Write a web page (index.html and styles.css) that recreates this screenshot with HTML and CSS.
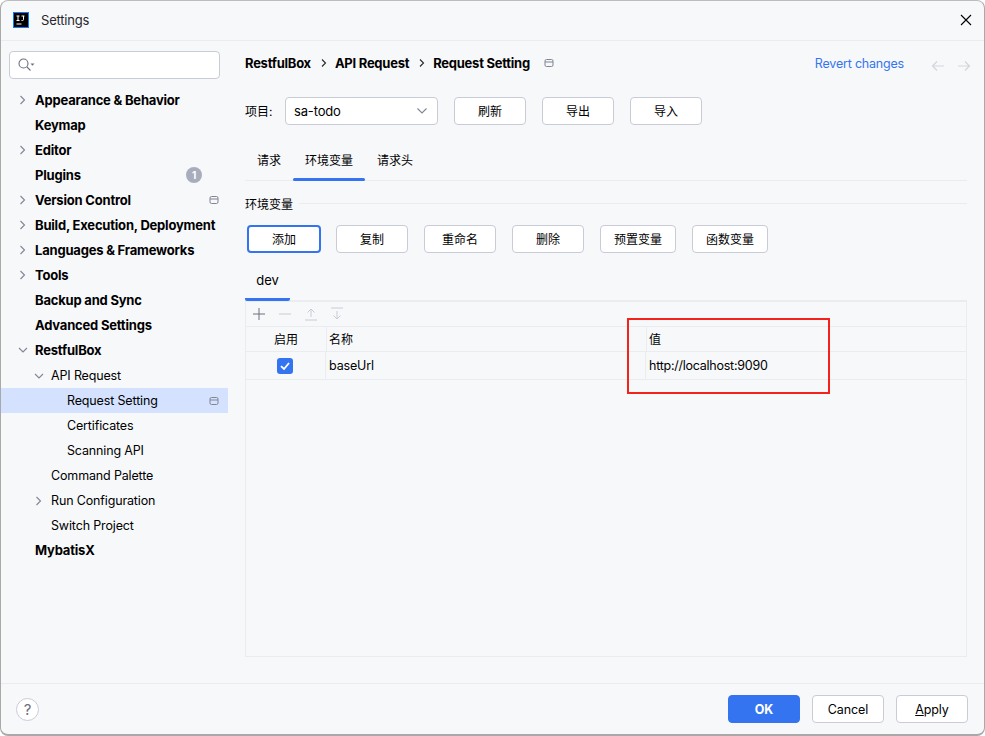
FILE: index.html
```html
<!DOCTYPE html>
<html lang="zh">
<head>
<meta charset="utf-8">
<title>Settings</title>
<link rel="stylesheet" href="styles.css">
</head>
<body>
<div class="window">
  <header class="titlebar">
    <svg class="logo" width="16" height="16" viewBox="0 0 16 16"><rect width="16" height="16" fill="#087cfa"/><rect x="1" y="1" width="14" height="14" fill="#000"/><path d="M3.500 4h3M5 4v4.500M3.500 8.500h3M8.500 4h3M10.500 4v3.500q0 1-1 1h-1M3.500 12h5" stroke="#fff" stroke-width="1" fill="none"/></svg>
    <span class="title">Settings</span>
    <svg class="close" width="12" height="12" viewBox="0 0 12 12"><path d="M1 1l10 10M11 1L1 11" stroke="#000" stroke-width="1.100"/></svg>
  </header>
  <div class="main">
    <aside class="sidebar">
      <div class="search">
        <svg width="18" height="16" viewBox="0 0 18 16"><circle cx="5.500" cy="6.500" r="4.500" fill="none" stroke="#6c707e" stroke-width="1.100"/><path d="M9 10l3.500 3.500" stroke="#6c707e" stroke-width="1.100"/><path d="M12.500 6.500h4l-2 2.200z" fill="#6c707e"/></svg>
      </div>
      <nav class="tree">
        <div class="row top"><svg class="arrow" viewBox="0 0 10 10"><path d="M2.500 1l4 4-4 4"/></svg>Appearance &amp; Behavior</div>
        <div class="row top"><span class="arrow"></span>Keymap</div>
        <div class="row top"><svg class="arrow" viewBox="0 0 10 10"><path d="M2.500 1l4 4-4 4"/></svg>Editor</div>
        <div class="row top"><span class="arrow"></span>Plugins<span class="badge">1</span></div>
        <div class="row top"><svg class="arrow" viewBox="0 0 10 10"><path d="M2.500 1l4 4-4 4"/></svg>Version Control<svg class="proj" viewBox="0 0 10 10"><rect x="1" y="1.500" width="8" height="7" rx="1.500"/><path d="M1 4h8"/></svg></div>
        <div class="row top"><svg class="arrow" viewBox="0 0 10 10"><path d="M2.500 1l4 4-4 4"/></svg>Build, Execution, Deployment</div>
        <div class="row top"><svg class="arrow" viewBox="0 0 10 10"><path d="M2.500 1l4 4-4 4"/></svg>Languages &amp; Frameworks</div>
        <div class="row top"><svg class="arrow" viewBox="0 0 10 10"><path d="M2.500 1l4 4-4 4"/></svg>Tools</div>
        <div class="row top"><span class="arrow"></span>Backup and Sync</div>
        <div class="row top"><span class="arrow"></span>Advanced Settings</div>
        <div class="row top"><svg class="arrow" viewBox="0 0 10 10"><path d="M1 3l4 4 4-4"/></svg>RestfulBox</div>
        <div class="row l1"><svg class="arrow" viewBox="0 0 10 10"><path d="M1 3l4 4 4-4"/></svg>API Request</div>
        <div class="row l2 selected">Request Setting<svg class="proj" viewBox="0 0 10 10"><rect x="1" y="1.500" width="8" height="7" rx="1.500"/><path d="M1 4h8"/></svg></div>
        <div class="row l2">Certificates</div>
        <div class="row l2">Scanning API</div>
        <div class="row l1"><span class="arrow"></span>Command Palette</div>
        <div class="row l1"><svg class="arrow" viewBox="0 0 10 10"><path d="M2.500 1l4 4-4 4"/></svg>Run Configuration</div>
        <div class="row l1"><span class="arrow"></span>Switch Project</div>
        <div class="row top"><span class="arrow"></span>MybatisX</div>
      </nav>
    </aside>
    <section class="content">
      <div class="crumbs">
        <b>RestfulBox</b>
        <svg class="sep" viewBox="0 0 8 10"><path d="M2 1.500L5.500 5 2 8.500"/></svg>
        <b>API Request</b>
        <svg class="sep" viewBox="0 0 8 10"><path d="M2 1.500L5.500 5 2 8.500"/></svg>
        <b>Request Setting</b>
        <svg class="proj crumb-proj" viewBox="0 0 10 10"><rect x="1" y="1.500" width="8" height="7" rx="1.500"/><path d="M1 4h8"/></svg>
        <a class="revert">Revert changes</a>
        <svg class="nav-arrow first" viewBox="0 0 14 12"><path d="M13 6H1.500M6 1.500L1.500 6 6 10.500"/></svg>
        <svg class="nav-arrow" viewBox="0 0 14 12"><path d="M1 6h11.500M8 1.500L12.500 6 8 10.500"/></svg>
      </div>
      <div class="project-row">
        <label class="zh">项目:</label>
        <div class="combo">sa-todo<svg viewBox="0 0 12 8" width="12" height="8"><path d="M1.500 1.500L6 6l4.500-4.500" fill="none" stroke="#818594" stroke-width="1.100"/></svg></div>
        <button class="btn">刷新</button>
        <button class="btn">导出</button>
        <button class="btn">导入</button>
      </div>
      <div class="tabs">
        <span class="tab">请求</span>
        <span class="tab active">环境变量</span>
        <span class="tab">请求头</span>
      </div>
      <div class="group-title"><span class="zh">环境变量</span><i></i></div>
      <div class="actions">
        <button class="btn primary">添加</button>
        <button class="btn">复制</button>
        <button class="btn">重命名</button>
        <button class="btn">删除</button>
        <button class="btn wide">预置变量</button>
        <button class="btn wide">函数变量</button>
      </div>
      <div class="env-tabs"><span class="env-tab">dev</span></div>
      <div class="panel">
        <div class="tools">
          <svg viewBox="0 0 16 16"><path d="M2 8h12M8 2v12" stroke="#6c707e"/></svg>
          <svg viewBox="0 0 16 16"><path d="M2 8h12" stroke="#c9ccd6"/></svg>
          <svg viewBox="0 0 16 16"><path d="M2 14h12M8 11V3M4.500 6.500L8 3l3.500 3.500" stroke="#c9ccd6"/></svg>
          <svg viewBox="0 0 16 16"><path d="M2 2h12M8 5v8M4.500 9.500L8 13l3.500-3.500" stroke="#c9ccd6"/></svg>
        </div>
        <div class="thead">
          <div class="c-on zh">启用</div>
          <div class="c-name zh">名称</div>
          <div class="c-val zh">值</div>
        </div>
        <div class="tbody-row">
          <div class="c-on"><span class="check"><svg width="16" height="16" viewBox="0 0 16 16"><path d="M4 8.200l3 2.800 5-6" fill="none" stroke="#fff" stroke-width="1.800"/></svg></span></div>
          <div class="c-name">baseUrl</div>
          <div class="c-val url">http://localhost:9090</div>
        </div>
      </div>
      <div class="highlight"></div>
    </section>
  </div>
  <footer class="footer">
    <span class="help">?</span>
    <button class="btn ok">OK</button>
    <button class="btn">Cancel</button>
    <button class="btn"><u>A</u>pply</button>
  </footer>
</div>
</body>
</html>
```
FILE: styles.css
```css
* { box-sizing: border-box; }
html, body { margin: 0; height: 100%; background: #fff; }
body {
  font-family: Inter, "Noto Sans CJK SC", sans-serif;
  font-size: 12.5px;
  letter-spacing: -0.15px;
  color: #000;
  overflow: hidden;
}
.zh { font-size: 12px; letter-spacing: 0; }
.window {
  width: 985px;
  height: 736px;
  display: flex;
  flex-direction: column;
  background: #f7f8fa;
  border-left: 1px solid #a9a9a9;
  border-right: 1px solid #a9a9a9;
  border-bottom: 2px solid #a9a9a9;
  border-top: 1px solid #bdbdbd;
  border-radius: 8px;
}
.titlebar {
  height: 40px;
  flex: none;
  display: flex;
  align-items: center;
  padding: 0 12px 2px;
  border-bottom: 1px solid #ebecf0;
}
.logo { flex: none; margin-right: 12px; }
.title { color: #27282e; font-size: 13px; letter-spacing: -0.2px; }
.close { margin-left: auto; }
.main { flex: 1; display: flex; min-height: 0; position: relative; }
.sidebar { width: 227px; flex: none; padding-top: 10px; }
.search {
  width: 211px;
  height: 28px;
  margin-left: 8px;
  background: #fff;
  border: 1px solid #c9ccd6;
  border-radius: 4px;
  display: flex;
  align-items: center;
  padding-left: 8px;
}
.tree { margin-top: 9px; }
.row { height: 25px; display: flex; align-items: center; white-space: nowrap; color: #000; }
.row.top { font-weight: 700; font-size: 13px; letter-spacing: -0.2px; padding: 0 0 2px 17px; }
.row.l1 { padding-left: 33px; }
.row.l2 { padding-left: 66px; }
.arrow { width: 10px; height: 10px; margin-right: 7px; flex: none; fill: none; stroke: #818594; stroke-width: 1.100; }
.selected { background: #d4e2ff; }
.badge {
  margin-left: auto;
  margin-right: 26px;
  width: 16px;
  height: 16px;
  border-radius: 50%;
  background: #a8adbd;
  color: #fff;
  font-size: 10px;
  font-weight: 700;
  display: flex;
  align-items: center;
  justify-content: center;
}
.proj { width: 10px; height: 10px; flex: none; fill: none; stroke: #818594; stroke-width: 1; margin-left: auto; margin-right: 9px; }
.content { flex: 1; min-width: 0; padding: 10px 17px 0 17px; position: relative; }
.crumbs { height: 24px; display: flex; align-items: center; }
.crumbs b { font-weight: 700; font-size: 13px; letter-spacing: -0.25px; }
.sep { width: 8px; height: 10px; margin: 0 7px 0 9px; fill: none; stroke: #27282e; stroke-width: 1.100; }
.crumb-proj { margin-left: 14px; margin-right: 0; }
.revert { margin-left: auto; color: #3574f0; letter-spacing: -0.2px; }
.nav-arrow { width: 14px; height: 12px; fill: none; stroke: #d3d5db; stroke-width: 1.200; margin-left: 12px; margin-right: -4px; margin-top: 6px; }
.nav-arrow.first { margin-left: 27px; margin-right: 0; }
.project-row { display: flex; align-items: center; margin-top: 22px; height: 28px; }
.project-row label { width: 40px; flex: none; color: #000; padding-bottom: 1px; }
.combo {
  width: 153px;
  height: 28px;
  background: #fff;
  border: 1px solid #c9ccd6;
  border-radius: 4px;
  padding: 0 9px 0 8px;
  display: flex;
  align-items: center;
  justify-content: space-between;
  margin-right: 16px;
  font-size: 13px;
  letter-spacing: -0.15px;
}
.btn {
  width: 72px;
  height: 28px;
  background: #fff;
  border: 1px solid #c9ccd6;
  border-radius: 4px;
  font-family: inherit;
  font-size: 12px;
  letter-spacing: 0;
  color: #000;
  padding: 0 0 1px;
  flex: none;
}
.project-row .btn { margin-right: 16px; }
.tabs {
  display: flex;
  margin-top: 21px;
  height: 35px;
  border-bottom: 1px solid #ebecf0;
  font-size: 12px;
  letter-spacing: 0;
}
.tab { padding: 0 12px 7px; position: relative; height: 34px; display: flex; align-items: center; }
.tab.active::after {
  content: "";
  position: absolute;
  left: 0;
  right: 0;
  bottom: -1px;
  height: 3px;
  background: #3574f0;
  border-radius: 2px;
}
.group-title { display: flex; align-items: center; margin-top: 13px; height: 18px; }
.group-title i { flex: 1; height: 1px; background: #ebecf0; margin-left: 6px; }
.actions { display: flex; gap: 16px; margin-top: 13px; padding-left: 2px; }
.btn.primary { border: 2px solid #3574f0; width: 74px; margin-right: -1px; }
.btn.wide { width: 76px; }
.env-tabs { height: 47px; position: relative; }
.env-tab {
  position: absolute;
  left: 0;
  top: 12px;
  height: 36px;
  width: 45px;
  display: flex;
  align-items: flex-start;
  justify-content: center;
  padding-top: 7px;
  border-bottom: 3px solid #3574f0;
  border-radius: 0 0 2px 2px;
  font-size: 13px;
  letter-spacing: 0;
}
.panel {
  width: 722px;
  height: 357px;
  border: 1px solid #ebecf0;
  border-top: 2px solid #ebecf0;
}
.tools { height: 24px; display: flex; align-items: center; padding-left: 5px; gap: 10px; }
.tools svg { width: 16px; height: 16px; fill: none; flex: none; }
.thead, .tbody-row { display: flex; border-top: 1px solid #ebecf0; align-items: center; }
.thead { height: 25px; }
.tbody-row { height: 29px; border-bottom: 1px solid #ebecf0; }
.c-on { width: 79px; flex: none; display: flex; justify-content: center; align-items: center; height: 100%; }
.c-name { width: 320px; flex: none; padding-left: 3px; height: 100%; display: flex; align-items: center; border-left: 1px solid #ebecf0; }
.c-val { flex: 1; padding-left: 3px; height: 100%; display: flex; align-items: center; border-left: 1px solid #ebecf0; }
.url { letter-spacing: -0.25px; }
.thead .c-on { width: 80px; padding-bottom: 2px; }
.thead .c-name, .thead .c-val { padding: 0 0 2px 2px; }
.check { width: 16px; height: 16px; background: #3574f0; border-radius: 3px; display: block; margin-right: 1px; }
.check svg { display: block; }
.highlight {
  position: absolute;
  left: 399px;
  top: 277px;
  width: 203px;
  height: 76px;
  border: 2px solid #f5211b;
  pointer-events: none;
}
.footer {
  height: 51px;
  flex: none;
  display: flex;
  align-items: center;
  justify-content: flex-end;
  gap: 12px;
  padding: 0 16px;
  border-top: 1px solid #ebecf0;
}
.footer .btn { font-size: 12.5px; letter-spacing: -0.1px; padding: 0; }
.help {
  margin-right: auto;
  margin-left: -1px;
  width: 23px;
  height: 23px;
  border: 1px solid #c9ccd6;
  border-radius: 50%;
  background: #fff;
  color: #6c707e;
  font-size: 15px;
  display: flex;
  align-items: center;
  justify-content: center;
}
.footer .btn.ok { background: #3574f0; border-color: #3574f0; color: #fff; font-weight: 700; }
```
